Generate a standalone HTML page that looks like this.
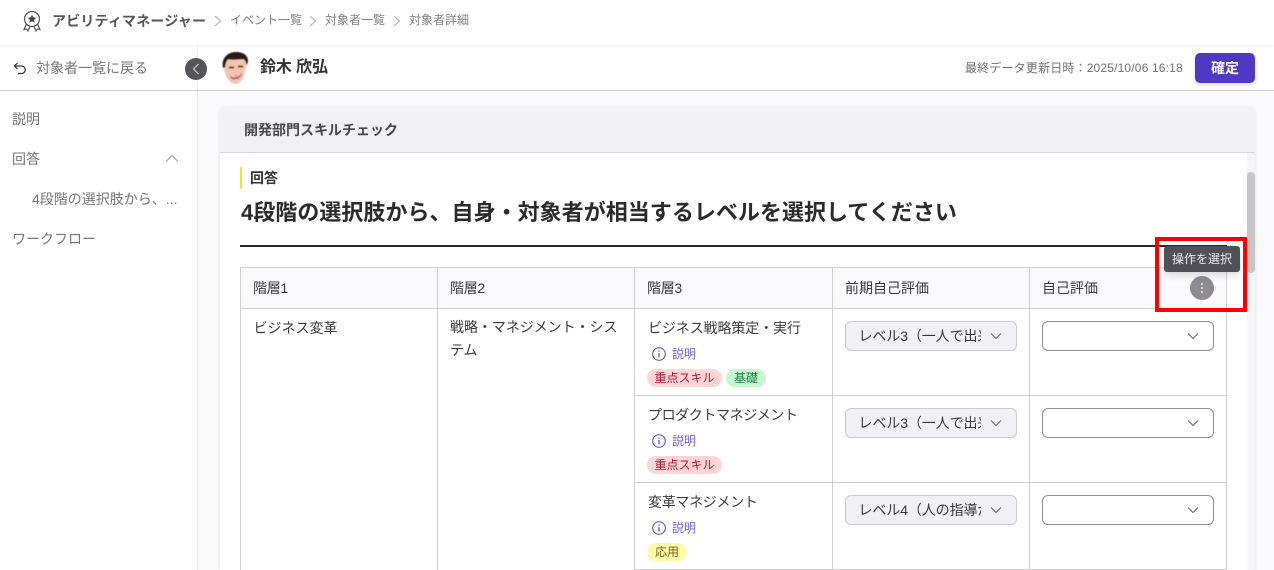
<!DOCTYPE html>
<html lang="ja"><head><meta charset="utf-8"><style>
*{box-sizing:border-box}
html,body{margin:0;padding:0;width:1274px;height:570px;overflow:hidden;background:#fff;font-family:"Liberation Sans","Noto Sans CJK JP",sans-serif;color:#333}
.a{position:absolute;white-space:nowrap}
.l{position:absolute;background:#cfcfd3}
.t{font-size:14px;line-height:20px;color:#3a3a3d}
.s{position:absolute;width:172px;height:30px;border:1px solid #c9c9cf;border-radius:6px;background:#f0f0f5;left:845px}
.s span{position:absolute;left:12.500px;top:4px;width:122px;overflow:hidden;white-space:nowrap;font-size:14px;line-height:20px;color:#3a3a3d;letter-spacing:-.1px}
.s svg,.e svg{position:absolute;right:14px;top:10px}
.e{position:absolute;width:172px;height:30px;border:1px solid #8e8e93;border-radius:6px;background:#fff;left:1042px}
.tag{position:absolute;height:18px;border-radius:9px;font-size:12px;line-height:18px;text-align:center;white-space:nowrap}
.r{background:#ffd6d6;color:#b8123a;width:75px;left:647px}
.g{background:#c5f7d0;color:#1b7a42;width:40px;left:726px}
.y{background:#fdfba8;color:#7a6412;width:40px;left:647px}
.i{position:absolute;left:652px}
.d{position:absolute;left:672px;font-size:12px;line-height:18px;color:#7565d6;white-space:nowrap}
</style></head><body>

<div class="a" style="left:0;top:0;width:1274px;height:45px;background:#fff;box-shadow:0 1px 2px rgba(0,0,0,.08)"></div>
<svg class="a" style="left:22px;top:10px" width="21" height="23" viewBox="0 0 21 23" fill="none" stroke="#555" stroke-width="1.200"><circle cx="10" cy="9" r="7.500"/><path d="M10 4.600l1.300 2.800 3 .4-2.200 2 .6 3-2.700-1.500-2.700 1.500.6-3-2.200-2 3-.4z" fill="#444" stroke="none"/><path d="M4.500 14l-2.500 5.500 2.500-.5 1.500 2 2-4.500M15.500 14l2.500 5.500-2.500-.5-1.500 2-2-4.500"/></svg>
<div class="a" style="left:52px;top:11px;font-size:14px;line-height:20px;font-weight:700;color:#55555a;letter-spacing:.18px">アビリティマネージャー</div>
<svg class="a" style="left:214px;top:15px" width="8" height="12" viewBox="0 0 8 12" fill="none" stroke="#aaa" stroke-width="1"><path d="M1 1l5.500 5-5.500 5"/></svg>
<div class="a" style="left:230px;top:11px;font-size:12px;line-height:18px;color:#808084">イベント一覧</div>
<svg class="a" style="left:309px;top:15px" width="8" height="12" viewBox="0 0 8 12" fill="none" stroke="#aaa" stroke-width="1"><path d="M1 1l5.500 5-5.500 5"/></svg>
<div class="a" style="left:325px;top:11px;font-size:12px;line-height:18px;color:#808084">対象者一覧</div>
<svg class="a" style="left:393px;top:15px" width="8" height="12" viewBox="0 0 8 12" fill="none" stroke="#aaa" stroke-width="1"><path d="M1 1l5.500 5-5.500 5"/></svg>
<div class="a" style="left:409px;top:11px;font-size:12px;line-height:18px;color:#808084">対象者詳細</div>

<!-- left nav -->
<div class="a" style="left:197px;top:46px;width:1px;height:524px;background:#eeeef2"></div>
<div class="l" style="left:0;top:90px;width:1274px;height:1px;background:#d2d2d6"></div>
<svg class="a" style="left:13px;top:62px" width="14" height="13" viewBox="0 0 14 13" fill="none" stroke="#333" stroke-width="1.200"><path d="M2 4h6.500a3.500 3.500 0 0 1 0 7.500H5M4.500 1L1.500 4l3 3"/></svg>
<div class="a" style="left:36px;top:58px;font-size:14px;line-height:20px;color:#77777b">対象者一覧に戻る</div>
<div class="a" style="left:185px;top:58px;width:22px;height:22px;border-radius:50%;background:#55555a"></div>
<svg class="a" style="left:192px;top:63px" width="8" height="12" viewBox="0 0 8 12" fill="none" stroke="#ddd" stroke-width="1"><path d="M6.500 1L1.500 6l5 5"/></svg>

<div class="a" style="left:12px;top:109px;font-size:14px;line-height:20px;color:#77777b">説明</div>
<div class="a" style="left:12px;top:149px;font-size:14px;line-height:20px;color:#77777b">回答</div>
<svg class="a" style="left:165px;top:154px" width="14" height="9" viewBox="0 0 14 9" fill="none" stroke="#999" stroke-width="1"><path d="M1 7.500l6-6 6 6"/></svg>
<div class="a" style="left:32px;top:189px;font-size:14px;line-height:20px;color:#77777b">4段階の選択肢から、...</div>
<div class="a" style="left:12px;top:229px;font-size:14px;line-height:20px;color:#77777b">ワークフロー</div>

<!-- subheader -->
<svg class="a" style="left:221px;top:52px;filter:blur(.5px)" width="28" height="33" viewBox="0 0 28 33"><path d="M3 12C3 4 9 1 15 1c6 0 11 3 11 9 0 3-1 5-2 9-1 6-4 12-9 13-5 0-9-5-11-11-1-3-1-6-1-8z" fill="#f3c4ae"/><path d="M2 16C0 7 6 0 15 0c7 0 12 3 12 9l-1 4c-1-2-1-4-3-6-5 0-11 1-16 0-2 2-3 5-3 8z" fill="#2a1917"/><path d="M8 15.500h5M17 14.500h5" stroke="#4a302a" stroke-width="1.400"/><path d="M9 24c4 1 8 0 12-3-1 4-3 6-6 6-3 1-5 0-6-3z" fill="#d8576b"/><path d="M11 24.500c3 .4 6-.4 8-2" stroke="#fff" stroke-width="1"/></svg>
<div class="a" style="left:260px;top:56px;font-size:16px;line-height:24px;font-weight:700;color:#333;letter-spacing:-.1px">鈴木 欣弘</div>
<div class="a" style="left:965px;top:59px;font-size:12px;line-height:18px;color:#707074;letter-spacing:.17px">最終データ更新日時：2025/10/06 16:18</div>
<div class="a" style="left:1195px;top:53px;width:60px;height:30px;border-radius:5px;background:#4f39c4;color:#fff;font-size:14px;font-weight:700;line-height:30px;text-align:center;box-shadow:0 2px 4px rgba(0,0,0,.15)">確定</div>

<!-- main background -->
<div class="a" style="left:198px;top:91px;width:1076px;height:479px;background:#fafafd"></div>
<div class="a" style="left:220px;top:107px;width:1035px;height:463px;background:#fff;border-radius:6px 6px 0 0;box-shadow:0 1px 4px rgba(0,0,0,.1)"></div>
<div class="a" style="left:220px;top:107px;width:1035px;height:46px;background:#f0f0f5;border-radius:6px 6px 0 0;border-bottom:1px solid #d8d8dc"></div>
<div class="a" style="left:244px;top:120px;font-size:14px;line-height:20px;font-weight:700;color:#48484c">開発部門スキルチェック</div>
<div class="a" style="left:1247px;top:153px;width:8px;height:417px;background:#f5f5f6"></div>
<div class="a" style="left:1247px;top:172px;width:8px;height:101px;border-radius:4px;background:#c6c6c9"></div>

<div class="a" style="left:240px;top:167px;width:2px;height:22px;background:#f4e12a"></div>
<div class="a" style="left:250px;top:168px;font-size:14px;line-height:20px;font-weight:700;color:#333">回答</div>
<div class="a" style="left:241px;top:197px;font-size:22px;line-height:32px;font-weight:700;color:#2b2b2e;letter-spacing:.03px">4段階の選択肢から、自身・対象者が相当するレベルを選択してください</div>
<div class="a" style="left:240px;top:245px;width:987px;height:2px;background:#26262a"></div>

<!-- table -->
<div class="a" style="left:240px;top:267px;width:987px;height:42px;background:#fafafd"></div>
<div class="l" style="left:240px;top:267px;width:987px;height:1px"></div>
<div class="l" style="left:240px;top:308px;width:987px;height:1px"></div>
<div class="l" style="left:634px;top:395px;width:593px;height:1px"></div>
<div class="l" style="left:634px;top:482px;width:593px;height:1px"></div>
<div class="l" style="left:634px;top:569px;width:593px;height:1px"></div>
<div class="l" style="left:240px;top:267px;width:1px;height:303px"></div>
<div class="l" style="left:437px;top:267px;width:1px;height:303px"></div>
<div class="l" style="left:634px;top:267px;width:1px;height:303px"></div>
<div class="l" style="left:832px;top:267px;width:1px;height:303px"></div>
<div class="l" style="left:1029px;top:267px;width:1px;height:303px"></div>
<div class="l" style="left:1226px;top:267px;width:1px;height:303px"></div>

<div class="a t" style="left:253px;top:278px;letter-spacing:-.3px">階層1</div>
<div class="a t" style="left:450px;top:278px;letter-spacing:-.3px">階層2</div>
<div class="a t" style="left:647px;top:278px;letter-spacing:-.3px">階層3</div>
<div class="a t" style="left:845px;top:278px">前期自己評価</div>
<div class="a t" style="left:1042px;top:278px">自己評価</div>

<div class="a t" style="left:253.500px;top:318px">ビジネス変革</div>
<div class="a t" style="left:450px;top:316px;line-height:23px;letter-spacing:-.05px">戦略・マネジメント・シス<br>テム</div>

<!-- row 1 -->
<div class="a t" style="left:648px;top:318px;letter-spacing:-.1px">ビジネス戦略策定・実行</div>
<svg class="i" style="top:347px" width="14" height="14" viewBox="0 0 14 14" fill="none" stroke="#5340c9"><circle cx="7" cy="7" r="6.300"/><path d="M7 6v4.500M7 3.500v1.200" stroke-width="1.200"/></svg>
<div class="d" style="top:345px">説明</div>
<div class="tag r" style="top:369px">重点スキル</div>
<div class="tag g" style="top:369px">基礎</div>
<div class="s" style="top:321px"><span>レベル3（一人で出来る）</span><svg width="12" height="8" viewBox="0 0 12 8" fill="none" stroke="#666" stroke-width="1.100"><path d="M1 1.500l5 5 5-5"/></svg></div>
<div class="e" style="top:321px"><svg width="12" height="8" viewBox="0 0 12 8" fill="none" stroke="#666" stroke-width="1.100"><path d="M1 1.500l5 5 5-5"/></svg></div>

<!-- row 2 -->
<div class="a t" style="left:648px;top:405px;letter-spacing:-.4px">プロダクトマネジメント</div>
<svg class="i" style="top:434px" width="14" height="14" viewBox="0 0 14 14" fill="none" stroke="#5340c9"><circle cx="7" cy="7" r="6.300"/><path d="M7 6v4.500M7 3.500v1.200" stroke-width="1.200"/></svg>
<div class="d" style="top:432px">説明</div>
<div class="tag r" style="top:456px">重点スキル</div>
<div class="s" style="top:408px"><span>レベル3（一人で出来る）</span><svg width="12" height="8" viewBox="0 0 12 8" fill="none" stroke="#666" stroke-width="1.100"><path d="M1 1.500l5 5 5-5"/></svg></div>
<div class="e" style="top:408px"><svg width="12" height="8" viewBox="0 0 12 8" fill="none" stroke="#666" stroke-width="1.100"><path d="M1 1.500l5 5 5-5"/></svg></div>

<!-- row 3 -->
<div class="a t" style="left:648px;top:492px;letter-spacing:-.3px">変革マネジメント</div>
<svg class="i" style="top:521px" width="14" height="14" viewBox="0 0 14 14" fill="none" stroke="#5340c9"><circle cx="7" cy="7" r="6.300"/><path d="M7 6v4.500M7 3.500v1.200" stroke-width="1.200"/></svg>
<div class="d" style="top:519px">説明</div>
<div class="tag y" style="top:543px">応用</div>
<div class="s" style="top:495px"><span>レベル4（人の指導が出来る）</span><svg width="12" height="8" viewBox="0 0 12 8" fill="none" stroke="#666" stroke-width="1.100"><path d="M1 1.500l5 5 5-5"/></svg></div>
<div class="e" style="top:495px"><svg width="12" height="8" viewBox="0 0 12 8" fill="none" stroke="#666" stroke-width="1.100"><path d="M1 1.500l5 5 5-5"/></svg></div>

<!-- kebab + tooltip + red box -->
<div class="a" style="left:1190px;top:276px;width:24px;height:24px;border-radius:50%;background:#8e8c92"></div>
<svg class="a" style="left:1200px;top:281px" width="4" height="14" viewBox="0 0 4 14" fill="#eee"><circle cx="2" cy="3" r="1"/><circle cx="2" cy="7" r="1"/><circle cx="2" cy="11" r="1"/></svg>
<div class="a" style="left:1164px;top:246px;width:76px;height:26px;border-radius:3px;background:#505056;color:#ececec;font-size:12px;line-height:26px;text-align:center;box-shadow:0 3px 8px rgba(0,0,0,.15)">操作を選択</div>
<div class="a" style="left:1155px;top:237px;width:92px;height:75px;border:4px solid #f00"></div>

</body></html>
